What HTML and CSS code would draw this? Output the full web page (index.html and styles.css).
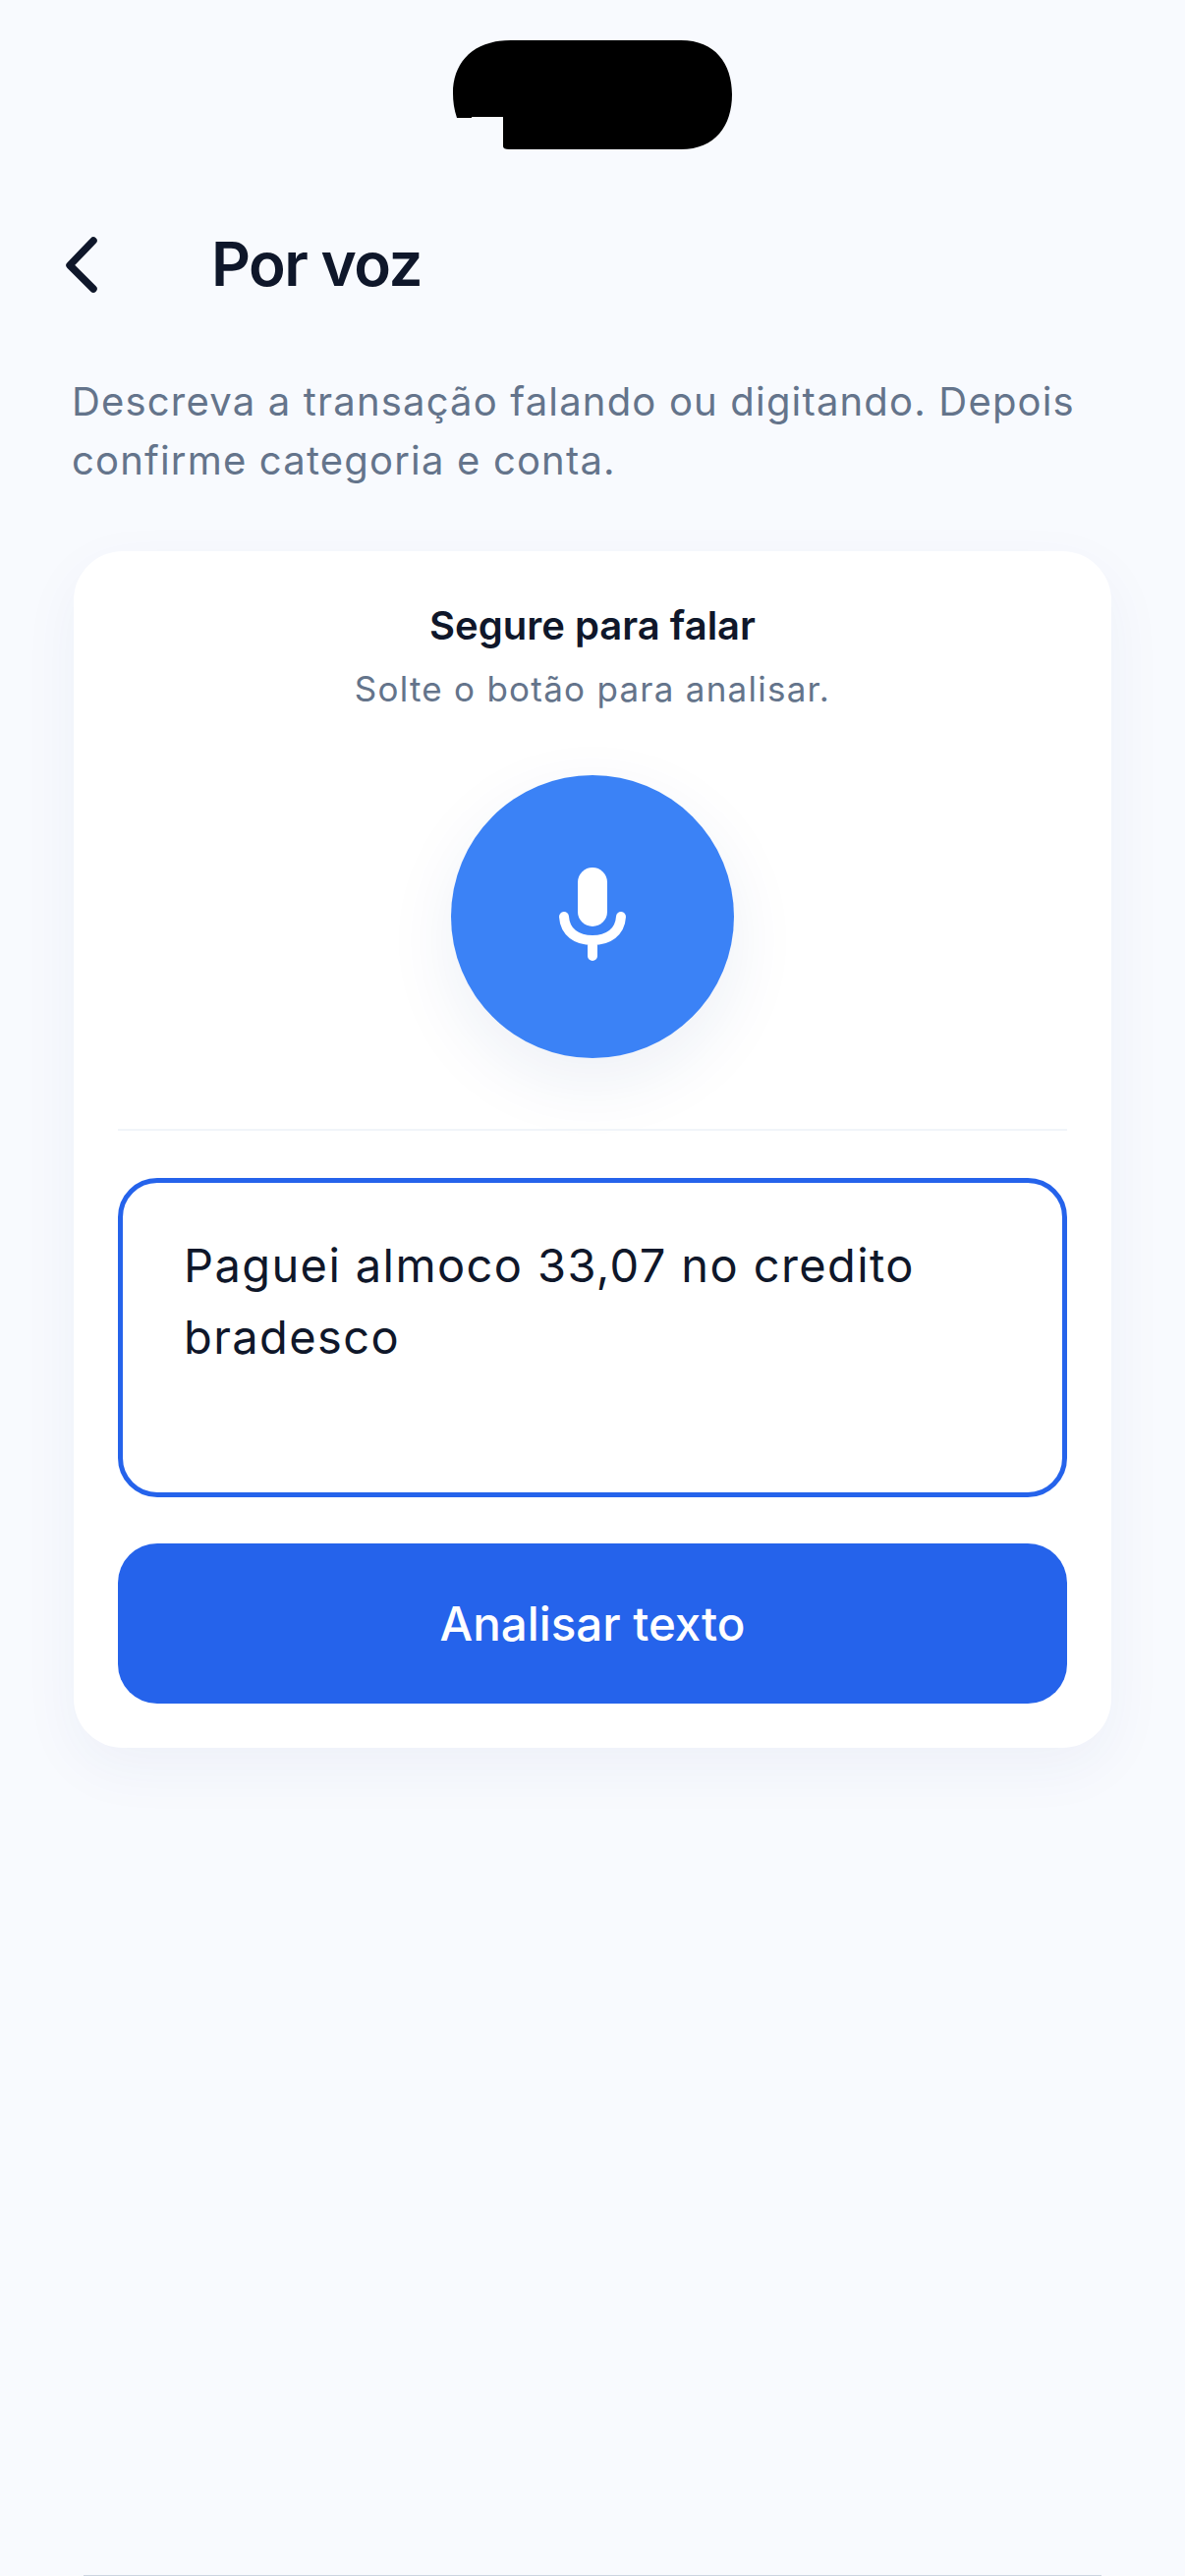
FILE: index.html
```html
<!DOCTYPE html>
<html lang="pt-BR">
<head>
<meta charset="utf-8"/>
<title>Por voz</title>
<meta name="viewport" content="width=device-width">
<link rel="stylesheet" href="styles.css">
</head>
<body>
<div class="page">
	<svg class="notch" width="285" height="111" viewBox="0 0 285 111" aria-hidden="true">
		<path d="M60 0H233C268 0 285 24 285 55C285 87 268 111 233 111H58Q52 111 52 108V78H20V79H5C2 70 1 62 1 54C1 22 22 0 60 0Z"/>
	</svg>
	<header class="topbar">
		<button class="back" type="button" aria-label="Voltar">
			<svg width="34" height="58" viewBox="0 0 34 58" fill="none" aria-hidden="true">
				<path d="M29 5L5 30L29 54" stroke="#0f172a" stroke-width="7.5" stroke-linecap="round" stroke-linejoin="round"/>
			</svg>
		</button>
		<h1>Por voz</h1>
	</header>
	<p class="intro">Descreva a transação falando ou digitando. Depois confirme categoria e conta.</p>
	<section class="card">
		<h2>Segure para falar</h2>
		<p class="hint">Solte o botão para analisar.</p>
		<button class="mic" type="button" aria-label="Segure para falar">
			<svg width="72" height="100" viewBox="0 0 72 100" fill="none" aria-hidden="true">
				<rect x="21" y="0" width="30" height="60" rx="15" fill="#fff"/>
				<path d="M7 50C8 66 20 74 36 74C52 74 64 66 65 50M36 74V90" stroke="#fff" stroke-width="10" stroke-linecap="round"/>
			</svg>
		</button>
		<hr class="divider">
		<textarea class="entry" rows="3">Paguei almoco 33,07 no credito bradesco</textarea>
		<button class="submit" type="button">Analisar texto</button>
	</section>
	<div class="home-line"></div>
</div>
</body>
</html>
```

FILE: styles.css
```css
* {
	box-sizing:border-box;
}
body {
	margin:0;
	background:#f8fafe;
	color:#0f172a;
	font:400 40px/60px "Inter", "Noto Sans", sans-serif;
}
button {
	border:none;
	padding:0;
	font:inherit;
}
.page {
	height:2622px;
	padding-top:41px;
	display:flex;
	flex-direction:column;
	overflow:hidden;
}
.notch {
	display:block;
	margin-left:460px;
	flex:none;
}
.topbar {
	display:flex;
	align-items:center;
	margin-top:87px;
	padding-left:66px;
	height:60px;
}
.back {
	display:block;
	background:none;
	width:149px;
	height:58px;
	text-align:left;
}
h1 {
	margin:0;
	font-size:62px;
	line-height:60px;
	font-weight:600;
	letter-spacing:-1.5px;
}
.intro {
	margin:80px 60px 0 73px;
	font-size:40px;
	line-height:60px;
	letter-spacing:1.18px;
	color:#64748b;
}
.card {
	margin:62px 75px 0 75px;
	padding:50px 45px 45px;
	background:#fff;
	border-radius:50px;
	box-shadow:0 20px 60px rgba(30,64,135,.05);
	display:flex;
	flex-direction:column;
	align-items:center;
}
h2 {
	margin:0;
	font-size:40px;
	line-height:52px;
	font-weight:600;
}
.hint {
	margin:16px 0 0;
	font-size:35px;
	line-height:44px;
	letter-spacing:1.25px;
	color:#64748b;
}
.mic {
	width:288px;
	height:288px;
	margin-top:66px;
	border-radius:50%;
	background:#3b82f6;
	box-shadow:0 24px 70px rgba(30,64,135,.08);
	display:flex;
	align-items:center;
	justify-content:center;
}
.divider {
	width:100%;
	height:2px;
	margin:72px 0 0;
	border:none;
	background:#f1f5f9;
}
.entry {
	display:block;
	width:100%;
	height:325px;
	margin-top:48px;
	padding:47px 62px;
	border:5px solid #2563eb;
	border-radius:40px;
	outline:none;
	resize:none;
	overflow:hidden;
	background:#fff;
	color:#0f172a;
	font:400 47px/73px "Inter", "Noto Sans", sans-serif;
	letter-spacing:1.4px;
}
.submit {
	width:100%;
	height:163px;
	margin-top:47px;
	border-radius:40px;
	background:#2563eb;
	color:#fff;
	font-size:47.5px;
	font-weight:500;
}
.home-line {
	height:1px;
	margin:auto 85px 0;
	background:#cbd5e1;
}
```
